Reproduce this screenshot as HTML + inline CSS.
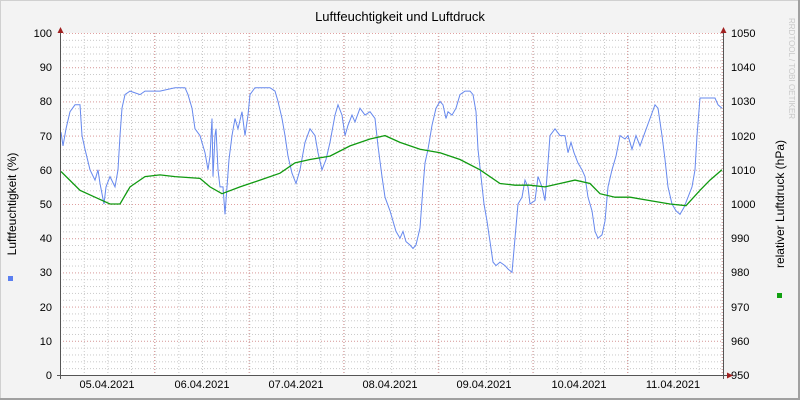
<!DOCTYPE html>
<html><head><meta charset="utf-8"><style>
html,body{margin:0;padding:0;background:#f3f3f3}
svg{display:block}
text{font-family:"Liberation Sans",sans-serif;font-size:11px;fill:#000}
</style></head><body>
<svg width="800" height="400" xmlns="http://www.w3.org/2000/svg">
<defs>
<pattern id="hmin" patternUnits="userSpaceOnUse" x="0" y="33" width="800" height="6.84">
<line x1="0" y1="0.5" x2="800" y2="0.5" stroke="#c8c8c8" stroke-width="1" stroke-dasharray="1,2"/>
</pattern>
<pattern id="vmin" patternUnits="userSpaceOnUse" x="12.8" y="0" width="23.65" height="400">
<line x1="0.5" y1="0" x2="0.5" y2="400" stroke="#c8c8c8" stroke-width="1" stroke-dasharray="1,2"/>
</pattern>
<pattern id="hmaj" patternUnits="userSpaceOnUse" x="0" y="33" width="800" height="34.2">
<line x1="0" y1="0.5" x2="800" y2="0.5" stroke="#e0a0a0" stroke-width="1" stroke-dasharray="1,2"/>
</pattern>
<pattern id="vmaj" patternUnits="userSpaceOnUse" x="154" y="0" width="94.6" height="400">
<line x1="0.5" y1="0" x2="0.5" y2="400" stroke="#e0a0a0" stroke-width="1" stroke-dasharray="1,2"/>
</pattern>
</defs>
<rect x="0" y="0" width="800" height="400" fill="#f3f3f3"/>
<rect x="0.5" y="0.5" width="799" height="399" fill="none" stroke="#d0d0d0"/>
<line x1="0" y1="399" x2="800" y2="399" stroke="#a0a0a0" stroke-width="2"/>
<line x1="799" y1="0" x2="799" y2="400" stroke="#a0a0a0" stroke-width="2"/>
<rect x="61" y="33" width="662" height="342" fill="#fff"/>
<rect x="61" y="33" width="662" height="342" fill="url(#hmin)"/>
<rect x="61" y="33" width="662" height="342" fill="url(#vmin)"/>
<rect x="61" y="33" width="662" height="342" fill="url(#hmaj)"/>
<rect x="62" y="33" width="661" height="342" fill="url(#vmaj)"/>
<text x="400" y="21" text-anchor="middle" style="font-size:13px">Luftfeuchtigkeit und Luftdruck</text>
<g text-anchor="end">
<text x="52" y="37">100</text><text x="52" y="71">90</text><text x="52" y="105">80</text><text x="52" y="140">70</text><text x="52" y="174">60</text><text x="52" y="208">50</text><text x="52" y="242">40</text><text x="52" y="276">30</text><text x="52" y="311">20</text><text x="52" y="345">10</text><text x="52" y="379">0</text>
</g>
<g>
<text x="731" y="37">1050</text><text x="731" y="71">1040</text><text x="731" y="105">1030</text><text x="731" y="140">1020</text><text x="731" y="174">1010</text><text x="731" y="208">1000</text><text x="731" y="242">990</text><text x="731" y="276">980</text><text x="731" y="311">970</text><text x="731" y="345">960</text><text x="731" y="379">950</text>
</g>
<g text-anchor="middle">
<text x="107" y="388">05.04.2021</text><text x="202" y="388">06.04.2021</text><text x="296" y="388">07.04.2021</text><text x="390" y="388">08.04.2021</text><text x="484" y="388">09.04.2021</text><text x="579" y="388">10.04.2021</text><text x="673" y="388">11.04.2021</text>
</g>
<text transform="translate(16,204) rotate(-90)" text-anchor="middle" style="font-size:12px">Luftfeuchtigkeit (%)</text>
<text transform="translate(784,204) rotate(-90)" text-anchor="middle" style="font-size:12px">relativer Luftdruck (hPa)</text>
<text transform="translate(789,18) rotate(90)" style="font-size:8px;fill:#c8c8c8">RRDTOOL / TOBI OETIKER</text>
<rect x="8" y="276" width="5" height="5" fill="#5a7ef0"/>
<rect x="777" y="293" width="5" height="5" fill="#10a010"/>
<polyline fill="none" stroke="#6688ee" stroke-width="1" points="61,132.2 63,145.9 66,128.8 70,111.7 75,104.8 80,104.8 82,135.6 85,149.3 90,169.8 95,180.1 98,169.8 100,183.5 104,204 106,186.9 110,176.6 115,186.9 118,169.8 120,135.6 122,108.2 125,94.6 130,91.1 140,94.6 145,91.1 160,91.1 175,87.7 185,87.7 188,94.6 192,108.2 195,128.8 200,135.6 205,152.7 208,169.8 210,156.1 212,118.5 213,176.6 215,135.6 216,128.8 218,169.8 220,186.9 223,186.9 225,214.3 227,186.9 229,159.5 232,135.6 235,118.5 238,128.8 242,111.7 245,135.6 248,115.1 250,94.6 255,87.7 270,87.7 275,91.1 278,101.4 282,118.5 285,135.6 288,156.1 292,173.2 296,183.5 300,169.8 305,142.4 310,128.8 315,135.6 318,152.7 322,169.8 326,159.5 330,142.4 335,115.1 338,104.8 342,115.1 345,135.6 348,125.3 352,115.1 355,121.9 360,108.2 365,115.1 370,111.7 375,118.5 378,145.9 382,176.6 385,197.2 390,210.8 393,221.1 396,231.4 400,238.2 403,231.4 406,241.6 410,245 413,248.5 416,245 420,228 423,186.9 425,163 428,149.3 432,125.3 436,108.2 440,101.4 443,104.8 446,118.5 448,111.7 452,115.1 456,108.2 460,94.6 465,91.1 470,91.1 473,94.6 476,111.7 478,149.3 481,176.6 484,204 487,221.1 490,241.6 493,262.1 496,265.6 500,262.1 505,265.6 508,269 512,272.4 515,238.2 518,204 522,197.2 525,180.1 528,186.9 530,204 535,200.6 538,176.6 542,186.9 545,200.6 547,176.6 550,135.6 555,128.8 560,135.6 565,135.6 568,152.7 571,142.4 574,152.7 578,163 582,169.8 585,176.6 588,197.2 592,210.8 595,231.4 598,238.2 602,234.8 605,221.1 608,186.9 612,169.8 616,156.1 620,135.6 625,139 628,135.6 632,149.3 636,135.6 640,145.9 645,132.2 650,118.5 655,104.8 658,108.2 662,135.6 665,159.5 668,186.9 672,204 676,210.8 680,214.3 684,207.4 688,197.2 692,186.9 695,169.8 697,135.6 700,98 715,98 718,104.8 722,108.2"/>
<polyline fill="none" stroke="#109a10" stroke-width="1.3" points="61,171.5 80,190.3 95,197.2 110,204 120,204 130,186.9 145,176.6 160,174.9 175,176.6 200,178.4 210,186.9 222,193.7 240,186.9 260,180.1 280,173.2 295,162.9 310,159.5 330,156.1 350,145.9 370,139 385,135.6 400,142.4 420,149.3 440,152.7 460,159.5 480,169.8 500,183.5 515,185.2 530,185.2 545,186.9 560,183.5 575,180.1 590,183.5 600,193.7 615,197.2 630,197.2 650,200.6 670,204 686,205.7 700,190.3 710,180.1 722,169.8"/>
<line x1="60.5" y1="30" x2="60.5" y2="379" stroke="#555"/>
<line x1="723.5" y1="30" x2="723.5" y2="379" stroke="#555"/>
<line x1="57" y1="375.5" x2="727" y2="375.5" stroke="#555"/>
<polygon points="57.5,33 63.5,33 60.5,27" fill="#a02020"/>
<polygon points="720.5,33 726.5,33 723.5,27" fill="#a02020"/>
<polygon points="727,372.5 727,378.5 733,375.5" fill="#a02020"/>
</svg>
</body></html>
